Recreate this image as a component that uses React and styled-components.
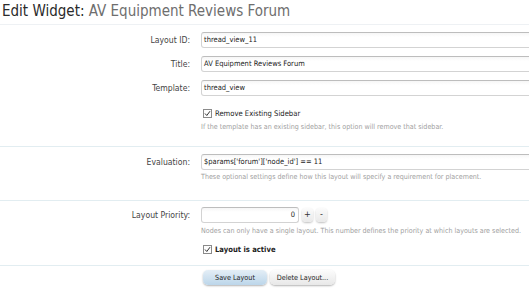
import React from "react";
import styled, { createGlobalStyle } from "styled-components";

const GlobalStyle = createGlobalStyle`
  html, body {
    margin: 0;
    padding: 0;
    background: #fff;
    overflow: hidden;
  }
  body {
    font-family: "DejaVu Sans Condensed", "DejaVu Sans", sans-serif;
    color: #333;
  }
`;

const Page = styled.div`
  width: 529px;
  height: 300px;
  overflow: hidden;
`;

const Heading = styled.h1`
  margin: 0;
  height: 24px;
  padding-left: 2px;
  font-size: 15px;
  line-height: 23px;
  font-weight: normal;
  color: #2a2a2a;
  border-bottom: 1px solid #eef1f4;
  white-space: nowrap;
`;

const Subject = styled.span`
  color: #6e6e6e;
`;

const Section = styled.div`
  padding: ${(p) => p.$top}px 0 ${(p) => p.$bottom}px;
  border-bottom: ${(p) => (p.$last ? "none" : "1px solid #e2edf1")};
`;

const Row = styled.div`
  display: grid;
  grid-template-columns: 190px 1fr;
  column-gap: 11px;
  align-items: start;
  margin-top: ${(p) => p.$gap || 0}px;
`;

const Label = styled.div`
  text-align: right;
  font-size: 8.6px;
  line-height: 16px;
  color: #444;
  white-space: nowrap;
`;

const Field = styled.div`
  display: flex;
  flex-direction: column;
  min-width: 0;
`;

const TextBox = styled.div`
  box-sizing: border-box;
  width: ${(p) => p.$width || 420}px;
  height: 16px;
  padding: 0 ${(p) => (p.$right ? 3 : 2)}px;
  border: 1px solid #d3d3d3;
  border-top-color: #bdbdbd;
  border-radius: 3px;
  background: linear-gradient(#f6f6f6, #fff 4px);
  font-size: 7.5px;
  line-height: 14px;
  color: #222;
  white-space: nowrap;
  text-align: ${(p) => (p.$right ? "right" : "left")};
`;

const Check = styled.div`
  display: flex;
  align-items: center;
  gap: 3px;
  height: 12px;
  margin-top: ${(p) => p.$gap || 0}px;
  font-size: 7.6px;
  font-weight: ${(p) => (p.$bold ? "bold" : "normal")};
  color: #222;
  white-space: nowrap;
`;

const Box = styled.span`
  box-sizing: border-box;
  display: inline-flex;
  width: 9px;
  height: 9px;
  border: 1px solid #8a8a8a;
  background: #fdfdfd;
  margin-left: 2px;
`;

const Hint = styled.div`
  margin-top: ${(p) => p.$gap || 0}px;
  font-size: 7.1px;
  line-height: 10px;
  color: #a0a0a0;
  white-space: nowrap;
`;

const Spin = styled.div`
  display: flex;
  align-items: center;
  gap: 3px;
`;

const SpinButton = styled.span`
  box-sizing: border-box;
  width: 11px;
  height: 14px;
  border-radius: 4px;
  background: linear-gradient(#fbfbfb, #e9e9e9);
  box-shadow: 0 1px 2px rgba(0, 0, 0, 0.25);
  font-size: 9px;
  line-height: 13px;
  text-align: center;
  color: #333;
`;

const Buttons = styled.div`
  display: flex;
  gap: 3px;
  padding-left: 2px;
`;

const Button = styled.span`
  box-sizing: border-box;
  display: inline-block;
  width: ${(p) => p.$width}px;
  height: 15px;
  border-radius: 5px;
  background: ${(p) =>
    p.$primary
      ? "linear-gradient(#e4eef6, #bcd6ea)"
      : "linear-gradient(#fcfcfc, #e8e8e8)"};
  box-shadow: 0 1px 2px rgba(0, 0, 0, 0.3);
  font-size: 7.2px;
  line-height: 15px;
  text-align: center;
  color: #222;
  white-space: nowrap;
`;

const CheckBox = () => (
  <Box>
    <svg width="7" height="7" viewBox="0 0 7 7">
      <path d="M1 3.5 L2.8 5.5 L6 1.2" fill="none" stroke="#333" strokeWidth="1" />
    </svg>
  </Box>
);

export default function App() {
  return (
    <Page>
      <GlobalStyle />
      <Heading>
        Edit Widget: <Subject>AV Equipment Reviews Forum</Subject>
      </Heading>

      <Section $top={7} $bottom={14}>
        <Row>
          <Label>Layout ID:</Label>
          <TextBox>thread_view_11</TextBox>
        </Row>
        <Row $gap={8}>
          <Label>Title:</Label>
          <TextBox>AV Equipment Reviews Forum</TextBox>
        </Row>
        <Row $gap={8}>
          <Label>Template:</Label>
          <Field>
            <TextBox>thread_view</TextBox>
            <Check $gap={11}>
              <CheckBox />
              Remove Existing Sidebar
            </Check>
            <Hint $gap={3}>
              If the template has an existing sidebar, this option will remove that sidebar.
            </Hint>
          </Field>
        </Row>
      </Section>

      <Section $top={7} $bottom={18}>
        <Row>
          <Label>Evaluation:</Label>
          <Field>
            <TextBox>$params['forum']['node_id'] == 11</TextBox>
            <Hint $gap={2}>
              These optional settings define how this layout will specify a requirement for placement.
            </Hint>
          </Field>
        </Row>
      </Section>

      <Section $top={6} $bottom={10}>
        <Row>
          <Label>Layout Priority:</Label>
          <Field>
            <Spin>
              <TextBox $width={98} $right>0</TextBox>
              <SpinButton>+</SpinButton>
              <SpinButton>-</SpinButton>
            </Spin>
            <Hint $gap={3}>
              Nodes can only have a single layout. This number defines the priority at which layouts are selected.
            </Hint>
            <Check $bold $gap={7}>
              <CheckBox />
              Layout is active
            </Check>
          </Field>
        </Row>
      </Section>

      <Section $top={4} $bottom={0} $last>
        <Row>
          <div />
          <Buttons>
            <Button $primary $width={64}>Save Layout</Button>
            <Button $width={65}>Delete Layout...</Button>
          </Buttons>
        </Row>
      </Section>
    </Page>
  );
}
